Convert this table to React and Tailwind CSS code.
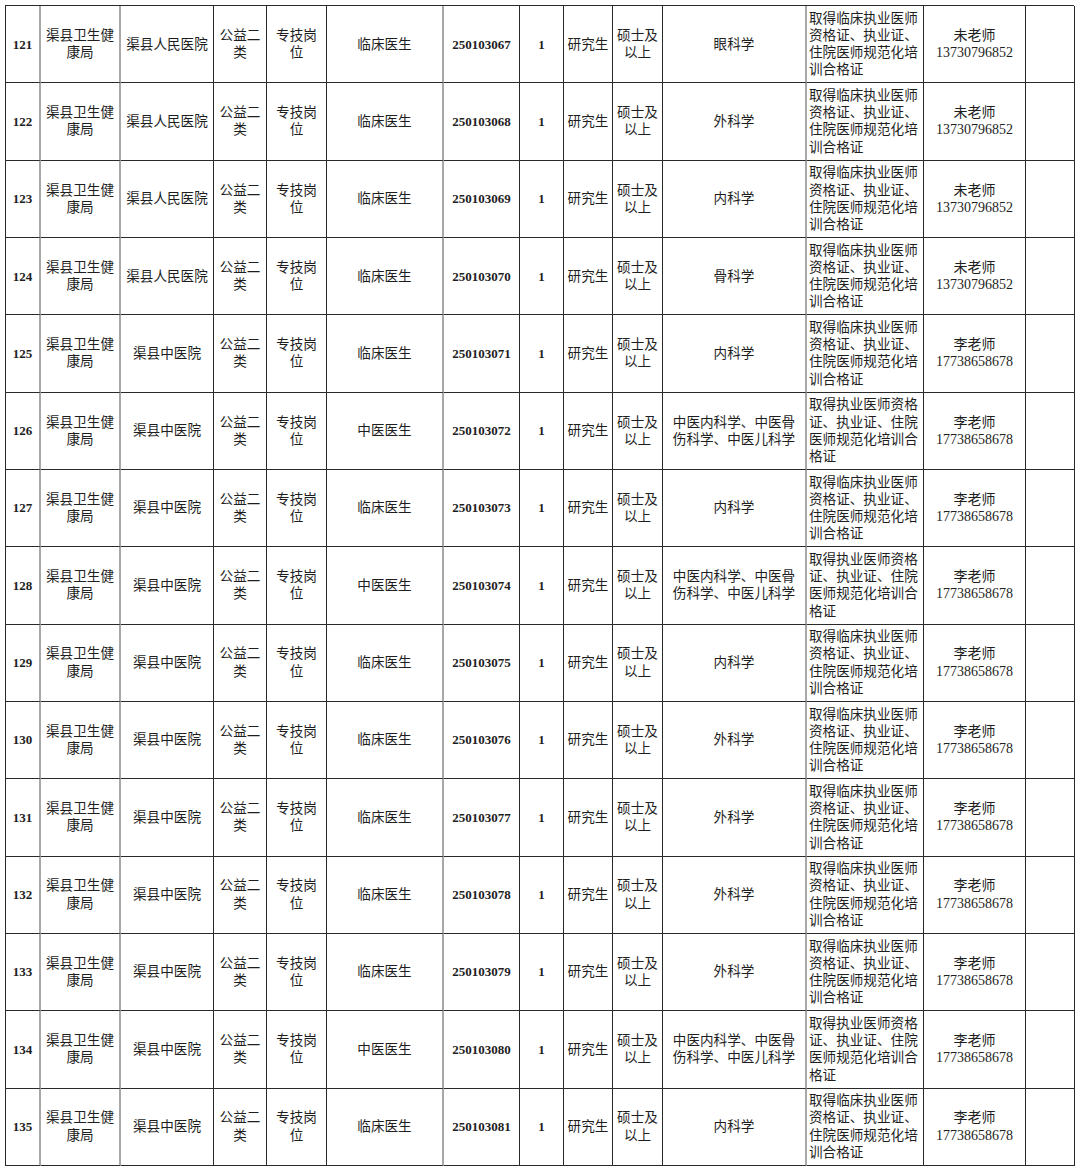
import React from "react";

const condA = ["取得临床执业医师", "资格证、执业证、", "住院医师规范化培", "训合格证"];
const condB = ["取得执业医师资格", "证、执业证、住院", "医师规范化培训合", "格证"];
const tcmMajor = ["中医内科学、中医骨", "伤科学、中医儿科学"];

const WEI = ["未老师", "13730796852"];
const LI = ["李老师", "17738658678"];

// [序号, 单位, 岗位名称, 代码, 专业, 条件, 联系人]
const rows = [
  [121, "渠县人民医院", "临床医生", "250103067", ["眼科学"], condA, WEI],
  [122, "渠县人民医院", "临床医生", "250103068", ["外科学"], condA, WEI],
  [123, "渠县人民医院", "临床医生", "250103069", ["内科学"], condA, WEI],
  [124, "渠县人民医院", "临床医生", "250103070", ["骨科学"], condA, WEI],
  [125, "渠县中医院", "临床医生", "250103071", ["内科学"], condA, LI],
  [126, "渠县中医院", "中医医生", "250103072", tcmMajor, condB, LI],
  [127, "渠县中医院", "临床医生", "250103073", ["内科学"], condA, LI],
  [128, "渠县中医院", "中医医生", "250103074", tcmMajor, condB, LI],
  [129, "渠县中医院", "临床医生", "250103075", ["内科学"], condA, LI],
  [130, "渠县中医院", "临床医生", "250103076", ["外科学"], condA, LI],
  [131, "渠县中医院", "临床医生", "250103077", ["外科学"], condA, LI],
  [132, "渠县中医院", "临床医生", "250103078", ["外科学"], condA, LI],
  [133, "渠县中医院", "临床医生", "250103079", ["外科学"], condA, LI],
  [134, "渠县中医院", "中医医生", "250103080", tcmMajor, condB, LI],
  [135, "渠县中医院", "临床医生", "250103081", ["内科学"], condA, LI],
];

const base =
  "flex flex-col items-center justify-center text-center border-b border-r border-[#2a2a2a] overflow-hidden";
const grayR = "border-r-2 border-r-[#a8a8a8]";

function Lines({ lines }) {
  return lines.map((l, i) => (
    <span key={i} className="block whitespace-nowrap">
      {l}
    </span>
  ));
}

function Row({ r }) {
  const [no, unit, post, code, major, cond, contact] = r;
  return (
    <>
      <div className={`${base} ${grayR} font-bold text-[13px]`}>{no}</div>
      <div className={`${base} ${grayR}`}>
        <Lines lines={["渠县卫生健", "康局"]} />
      </div>
      <div className={base}>{unit}</div>
      <div className={base}>
        <Lines lines={["公益二", "类"]} />
      </div>
      <div className={base}>
        <Lines lines={["专技岗", "位"]} />
      </div>
      <div className={`${base} ${grayR}`}>{post}</div>
      <div className={`${base} font-bold text-[13px]`}>{code}</div>
      <div className={`${base} font-bold text-[13px]`}>1</div>
      <div className={base}>研究生</div>
      <div className={base}>
        <Lines lines={["硕士及", "以上"]} />
      </div>
      <div className={`${base} ${grayR}`}>
        <Lines lines={major} />
      </div>
      <div className={`${base} !items-start !text-left pl-[2px]`}>
        <Lines lines={cond} />
      </div>
      <div className={`${base} text-[14px]`}>
        <Lines lines={contact} />
      </div>
      <div className={base}></div>
    </>
  );
}

export default function App() {
  return (
    <div className="min-h-[1171px] bg-white pt-[5px] pl-[5px]">
      <div
        className="grid w-[1069px] grid-cols-[35px_80px_93px_53px_60px_117px_76px_44px_49px_50px_144px_117px_102px_49px] auto-rows-[77.33px] border-t border-l border-[#2a2a2a] text-[13.6px] leading-[17.3px] text-[#1e1e1e]"
        style={{ fontFamily: '"Liberation Serif", "Noto Sans CJK SC", serif' }}
      >
        {rows.map((r) => (
          <Row key={r[0]} r={r} />
        ))}
      </div>
    </div>
  );
}
